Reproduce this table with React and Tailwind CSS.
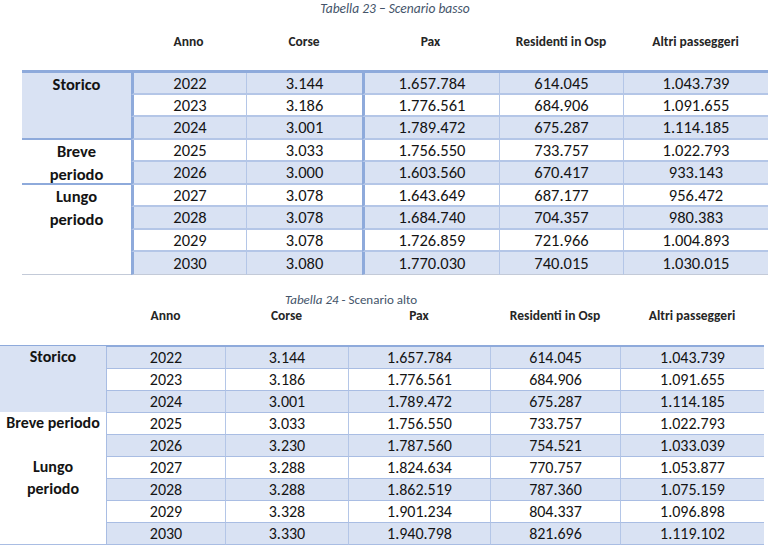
import React from "react";

const T1 = [
  ["2022", "3.144", "1.657.784", "614.045", "1.043.739"],
  ["2023", "3.186", "1.776.561", "684.906", "1.091.655"],
  ["2024", "3.001", "1.789.472", "675.287", "1.114.185"],
  ["2025", "3.033", "1.756.550", "733.757", "1.022.793"],
  ["2026", "3.000", "1.603.560", "670.417", "933.143"],
  ["2027", "3.078", "1.643.649", "687.177", "956.472"],
  ["2028", "3.078", "1.684.740", "704.357", "980.383"],
  ["2029", "3.078", "1.726.859", "721.966", "1.004.893"],
  ["2030", "3.080", "1.770.030", "740.015", "1.030.015"],
];

const T2 = [
  ["2022", "3.144", "1.657.784", "614.045", "1.043.739"],
  ["2023", "3.186", "1.776.561", "684.906", "1.091.655"],
  ["2024", "3.001", "1.789.472", "675.287", "1.114.185"],
  ["2025", "3.033", "1.756.550", "733.757", "1.022.793"],
  ["2026", "3.230", "1.787.560", "754.521", "1.033.039"],
  ["2027", "3.288", "1.824.634", "770.757", "1.053.877"],
  ["2028", "3.288", "1.862.519", "787.360", "1.075.159"],
  ["2029", "3.328", "1.901.234", "804.337", "1.096.898"],
  ["2030", "3.330", "1.940.798", "821.696", "1.119.102"],
];

const HEADERS = ["Anno", "Corse", "Pax", "Residenti in Osp", "Altri passeggeri"];

const T1_COL_BORDER = [
  "border-l-[3px] border-l-[#8eaadb]",
  "border-l border-l-[#b4c6e7]",
  "border-l-[3px] border-l-[#8eaadb]",
  "border-l border-l-[#b4c6e7]",
  "border-l border-l-[#b4c6e7]",
];

const T2_COL_BORDER = [
  "border-l border-l-[#a9bde3]",
  "border-l border-l-[#b4c6e7]",
  "border-l border-l-[#b4c6e7]",
  "border-l border-l-[#b4c6e7]",
  "border-l border-l-[#b4c6e7]",
];

function dataCells(row, i, colBorders, rowLine, textSize) {
  const bg = i % 2 === 0 ? "bg-[#d9e2f3]" : "bg-white";
  return row.map((v, j) => (
    <div
      key={`${i}-${j}`}
      className={`flex items-center justify-center ${bg} ${rowLine} ${colBorders[j]} ${textSize} leading-none text-[#141414]`}
    >
      {v}
    </div>
  ));
}

function Table1() {
  const groups = [
    { label: ["Storico"], span: "row-span-3", bg: "bg-[#d9e2f3]", line: "border-b-[2px] border-b-[#8eaadb]", rows: [0, 1, 2] },
    { label: ["Breve", "periodo"], span: "row-span-2", bg: "bg-white", line: "border-b-[2px] border-b-[#8eaadb]", rows: [3, 4] },
    { label: ["Lungo", "periodo"], span: "row-span-4", bg: "bg-white", line: "border-b border-b-[#c3cad8]", rows: [5, 6, 7, 8] },
  ];
  return (
    <div className="pl-[22px]">
      <div className="h-[18px] flex items-center justify-center text-[13.5px] italic text-[#44546a] leading-none">
        Tabella 23 – Scenario basso
      </div>
      <div className="h-[52px] pb-[4px] grid grid-cols-[109px_115px_116px_137px_124px_145px] items-center">
        <div />
        {HEADERS.map((h) => (
          <div key={h} className="text-center text-[13.5px] font-bold text-[#262626] leading-none">
            {h}
          </div>
        ))}
      </div>
      <div className="border-t-[3px] border-t-[#8eaadb] grid grid-cols-[109px_115px_116px_137px_124px_145px] grid-rows-[22px_22px_23px_22px_23px_22px_23px_22px_23px]">
        {groups.map((g) => (
          <React.Fragment key={g.label.join(" ")}>
            <div className={`${g.span} ${g.bg} ${g.line} flex flex-col items-center text-[16.5px] font-bold leading-[22.5px] text-[#141414]`}>
              {g.label.map((l) => (
                <span key={l}>{l}</span>
              ))}
            </div>
            {g.rows.map((i) =>
              dataCells(
                T1[i],
                i,
                T1_COL_BORDER,
                i === 8 ? "border-b border-b-[#c3cad8]" : "border-b-[2px] border-b-[#b4c6e7]",
                "text-[16.5px]"
              )
            )}
          </React.Fragment>
        ))}
      </div>
    </div>
  );
}

function Table2() {
  const groups = [
    { label: ["Storico"], span: "row-span-3", bg: "bg-[#d9e2f3]", line: "border-b border-b-[#a9bde3]", rows: [0, 1, 2] },
    { label: ["Breve periodo"], span: "row-span-2", bg: "bg-white", line: "border-b border-b-[#a9bde3]", rows: [3, 4] },
    { label: ["Lungo", "periodo"], span: "row-span-4", bg: "bg-white", line: "border-b border-b-[#a9bde3]", rows: [5, 6, 7, 8] },
  ];
  return (
    <div className="w-[764px] mt-[16px]">
      <div className="h-[16px] pl-[285px] flex items-center text-[13px] text-[#44546a] leading-none">
        <span className="italic">Tabella 24</span>
        <span>&nbsp;- Scenario alto</span>
      </div>
      <div className="h-[38px] grid grid-cols-[106px_119px_123px_142px_130px_144px] items-start">
        <div />
        {HEADERS.map((h) => (
          <div key={h} className="h-[18px] flex items-center justify-center text-[13.5px] font-bold text-[#262626] leading-none">
            {h}
          </div>
        ))}
      </div>
      <div className="border-t-[2px] border-t-[#8eaadb] grid grid-cols-[106px_119px_123px_142px_130px_144px] grid-rows-[22px_22px_22px_22px_22px_22px_22px_22px_22px]">
        {groups.map((g) => (
          <React.Fragment key={g.label.join(" ")}>
            <div className={`${g.span} ${g.bg} ${g.line} flex flex-col items-center -mt-[1px] text-[16px] font-bold leading-[22px] text-[#141414] whitespace-nowrap`}>
              {g.label.map((l) => (
                <span key={l}>{l}</span>
              ))}
            </div>
            {g.rows.map((i) =>
              dataCells(T2[i], i, T2_COL_BORDER, "border-b border-b-[#a9bde3]", "text-[16px]")
            )}
          </React.Fragment>
        ))}
      </div>
    </div>
  );
}

export default function App() {
  return (
    <div className="w-[768px] h-[554px] overflow-hidden bg-white font-['Carlito','Lato','Noto_Sans',sans-serif]">
      <Table1 />
      <Table2 />
    </div>
  );
}
